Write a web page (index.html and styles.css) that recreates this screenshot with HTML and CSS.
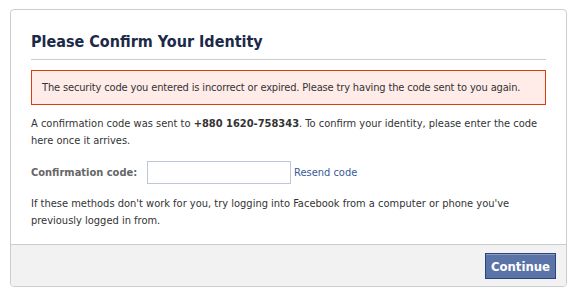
FILE: index.html
```html
<!DOCTYPE html>
<html>
<head>
<meta charset="utf-8">
<link rel="stylesheet" href="styles.css">
</head>
<body>
<div class="dialog">
  <div class="body">
    <h2 class="title">Please Confirm Your Identity</h2>
    <div class="error">The security code you entered is incorrect or expired. Please try having the code sent to you again.</div>
    <p class="info">A confirmation code was sent to <b>+880 1620-758343</b>. To confirm your identity, please enter the code here once it arrives.</p>
    <div class="row">
      <label class="label">Confirmation code:</label>
      <input class="input" type="text">
      <a class="link" href="#">Resend code</a>
    </div>
    <p class="info info-last">If these methods don't work for you, try logging into Facebook from a computer or phone you've previously logged in from.</p>
  </div>
  <div class="footer">
    <button class="btn">Continue</button>
  </div>
</div>
</body>
</html>
```

FILE: styles.css
```css
html, body {
  margin: 0;
  padding: 0;
  background: #fff;
}
body {
  font-family: "DejaVu Sans Condensed", "DejaVu Sans", sans-serif;
  font-size: 11px;
  color: #333;
}
.dialog {
  margin: 9px 0 0 10px;
  width: 555px;
  border: 1px solid #ccc;
  border-radius: 4px;
  overflow: hidden;
}
.body {
  padding: 21px 20px 15px 20px;
}
.title {
  margin: 0;
  padding: 0 0 7px 0;
  border-bottom: 1px solid #ccc;
  font-size: 16px;
  font-weight: bold;
  color: #1c2a47;
  line-height: 21px;
}
.error {
  margin-top: 10px;
  border: 1px solid #dd3c10;
  background: #ffebe8;
  padding: 10px 4px 10px 10px;
  line-height: 13px;
  letter-spacing: -0.15px;
  white-space: nowrap;
}
.info {
  margin: 10px 0 0 0;
  line-height: 17px;
}
.info-last {
  margin-top: 11px;
}
.row {
  display: flex;
  align-items: center;
  margin-top: 12px;
}
.label {
  font-weight: bold;
  color: #666;
  width: 116px;
}
.input {
  width: 140px;
  height: 19px;
  border: 1px solid #bdc7d8;
  padding: 1px;
  margin: 0 3px 0 0;
  font: inherit;
}
.link {
  color: #3b5998;
  text-decoration: none;
}
.footer {
  background: #f2f2f2;
  border-top: 1px solid #ccc;
  display: flex;
  justify-content: flex-end;
  padding: 8px 10px 7px 10px;
}
.btn {
  background: #5b74a8;
  border: 1px solid #29447e;
  box-shadow: inset 0 1px 0 #8a9cc2;
  color: #fff;
  font-family: "DejaVu Sans Condensed", "DejaVu Sans", sans-serif;
  font-weight: bold;
  font-size: 13px;
  height: 26px;
  width: 71px;
  padding: 0;
}
```
